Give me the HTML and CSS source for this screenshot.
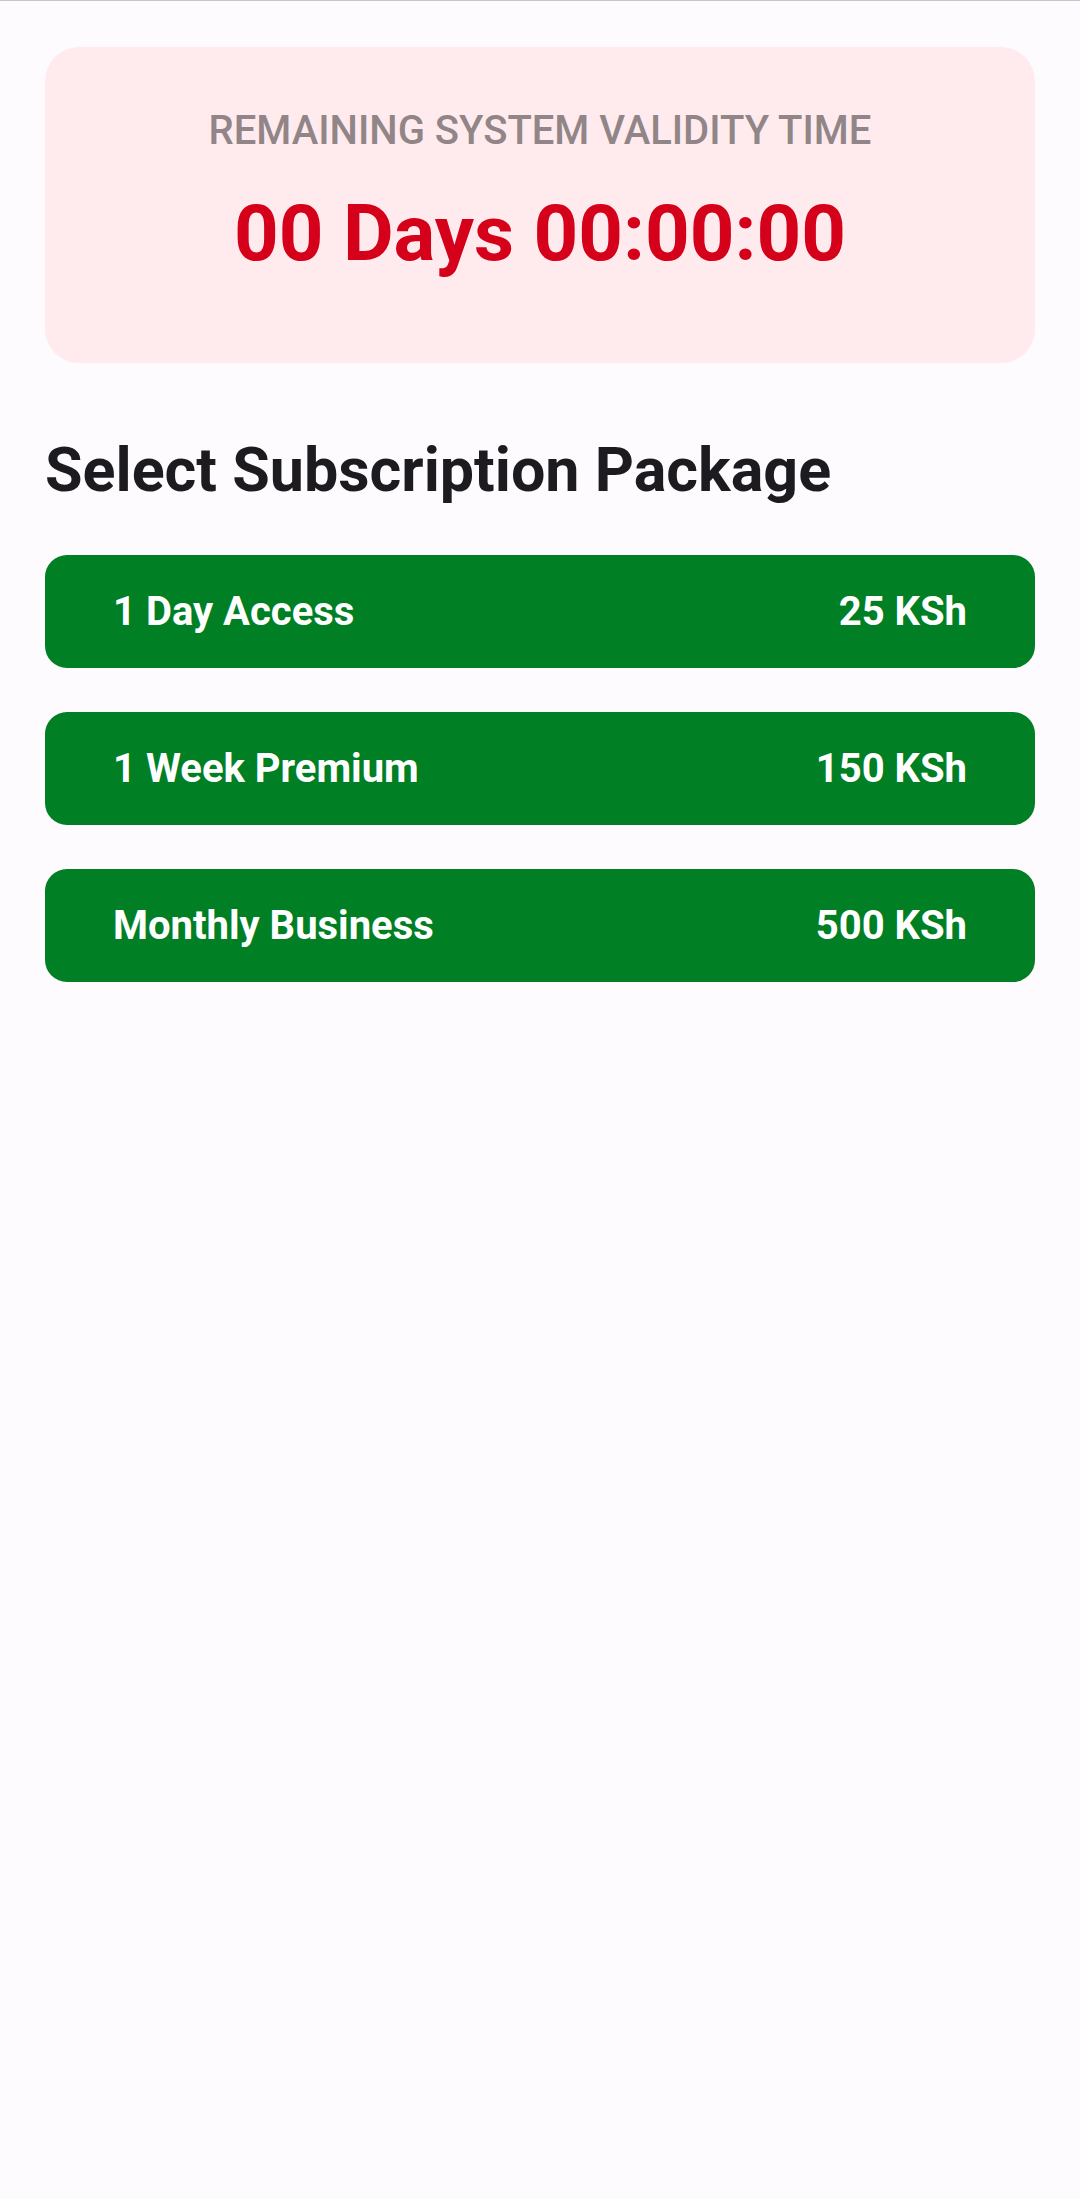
FILE: index.html
```html
<!DOCTYPE html>
<html lang="en">
<head>
<meta charset="utf-8">
<meta name="viewport" content="width=device-width, initial-scale=1">
<title>Subscription</title>
<link rel="stylesheet" href="styles.css">
</head>
<body>
<main class="screen">
  <section class="validity">
    <p class="validity-label">REMAINING SYSTEM VALIDITY TIME</p>
    <p class="validity-time">00 Days 00:00:00</p>
  </section>
  <h1 class="title">Select Subscription Package</h1>
  <div class="packages">
    <button class="package" type="button"><span>1 Day Access</span><span>25 KSh</span></button>
    <button class="package" type="button"><span>1 Week Premium</span><span>150 KSh</span></button>
    <button class="package" type="button"><span>Monthly Business</span><span>500 KSh</span></button>
  </div>
</main>
</body>
</html>
```
FILE: styles.css
```css
* {
  box-sizing: border-box;
}

body {
  margin: 0;
  min-height: 100vh;
  background: #fefbff;
  color: #1c1b1f;
  font-family: Roboto, sans-serif;
}

.screen {
  padding: 46px 45px;
  border-top: 1px solid #cac4d0;
}

.validity {
  padding: 56px 56px 78px;
  border-radius: 34px;
  background: #ffebee;
  text-align: center;
}

.validity-label {
  margin: 0;
  color: #918587;
  font-size: 40px;
  font-weight: 500;
  line-height: 56px;
}

.validity-time {
  margin: 24px 0 0;
  color: #d50019;
  font-size: 78px;
  font-weight: 700;
  line-height: 102px;
}

.title {
  margin: 67px 0 45px;
  font-size: 61px;
  font-weight: 700;
  line-height: 80px;
}

.packages {
  display: flex;
  flex-direction: column;
  gap: 44px;
}

.package {
  display: flex;
  justify-content: space-between;
  align-items: center;
  width: 100%;
  min-height: 113px;
  padding: 28px 68px;
  border: 0;
  border-radius: 22px;
  background: #007f24;
  color: #fff;
  font-family: inherit;
  font-size: 40px;
  font-weight: 700;
  line-height: 56px;
  cursor: pointer;
}
```
